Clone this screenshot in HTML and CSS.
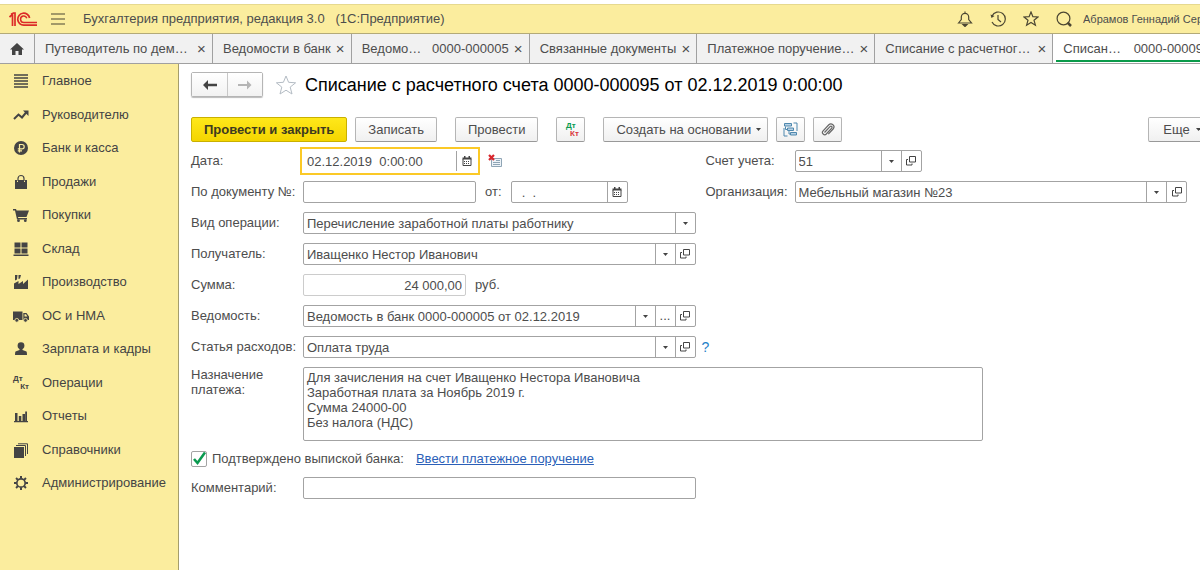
FILE: index.html
```html
<!DOCTYPE html>
<html lang="ru">
<head>
<meta charset="utf-8">
<title>Списание с расчетного счета</title>
<link rel="stylesheet" href="styles.css">
</head>
<body>
<svg class="sprite" aria-hidden="true">
  <symbol id="i-open" viewBox="0 0 12 12"><path d="M4.500 1.500h6v5.500h-6z" fill="none" stroke="#444"/><path d="M3 4.500H1.500v5.500h5.500V8.500" fill="none" stroke="#444"/></symbol>
  <symbol id="i-down" viewBox="0 0 5 3"><path d="M0 0h5L2.500 3z" fill="#444"/></symbol>
  <symbol id="i-cal" viewBox="0 0 10 10"><path d="M0.500 1.500h9v2h-9zM2 0h1.500v2H2zM6.500 0H8v2H6.500z" fill="#444"/><path d="M1 3v6.500h8V3" fill="none" stroke="#444"/><path d="M2 5h1v1H2zm2 0h1v1H4zm2 0h1v1H6zM2 7h1v1H2zm2 0h1v1H4zm2 0h1v1H6z" fill="#444"/></symbol>
</svg>
<header class="topbar">
  <svg class="logo" viewBox="0 0 29 15" aria-label="1С"><g fill="none" stroke="#dc2b28" stroke-width="1.700"><path d="M0.500 5 3.500 2.300V14M2 2.200 4.500 1H6V14"/><path d="M20.600 6A6 6 0 1 0 14.800 13.200H28"/><path d="M17.800 6.200a3.200 3.200 0 1 0-3 4.200H28" stroke-width="1.500"/></g></svg>
  <button class="icon-btn menu" aria-label="Меню"><svg width="14" height="12" viewBox="0 0 14 12"><path d="M0 1h14M0 6h14M0 11h14" stroke="#4b4632" stroke-width="1.200"/></svg></button>
  <span class="app-title">Бухгалтерия предприятия, редакция 3.0 &nbsp; (1С:Предприятие)</span>
  <div class="top-actions">
    <button class="icon-btn" aria-label="Уведомления"><svg width="16" height="16" viewBox="0 0 16 16" fill="none" stroke="#4b4632" stroke-width="1.200"><path d="M8 0.500v1.500M1.500 12 4.300 8.500V6a3.700 3.700 0 0 1 7.400 0v2.500L14.500 12z"/><path d="M6 13.500h4L8 15.500z" fill="#4b4632"/></svg></button>
    <button class="icon-btn" aria-label="История"><svg width="16" height="16" viewBox="0 0 16 16" fill="none" stroke="#4b4632" stroke-width="1.200"><path d="M2 5a7 7 0 1 1 0 6"/><path d="M8 4v4.500l3 2.500"/><path d="M0.500 3.500 4.500 5 1.500 7z" fill="#4b4632" stroke="none"/></svg></button>
    <button class="icon-btn" aria-label="Избранное"><svg width="16" height="16" viewBox="0 0 16 16" fill="none" stroke="#4b4632" stroke-width="1.200"><path d="M8 1l1.900 4.700 5.100.3-4 3.200 1.400 5L8 11.500l-4.400 2.700 1.400-5L1 6l5.100-.3z"/></svg></button>
    <button class="icon-btn" aria-label="Поиск"><svg width="16" height="16" viewBox="0 0 16 16" fill="none" stroke="#4b4632" stroke-width="1.200"><circle cx="7.500" cy="7.500" r="6.400"/><path d="M11.500 11.500 15 15" stroke-width="2.500"/></svg></button>
  </div>
  <span class="user">Абрамов Геннадий Сергеевич</span>
</header>
<nav class="tabs" aria-label="Открытые окна">
  <button class="home" aria-label="Начальная страница"><svg width="14" height="12" viewBox="0 0 14 12"><path d="M7 0 14 6.500H12V12H8.500V8h-3v4H2V6.500H0z" fill="#444"/></svg></button>
  <div class="tab wide"><a href="#">Путеводитель по дем…</a><button aria-label="Закрыть">×</button></div>
  <div class="tab"><a href="#">Ведомости в банк</a><button aria-label="Закрыть">×</button></div>
  <div class="tab wide"><a href="#"><span>Ведомо…</span><span>0000-000005</span></a><button aria-label="Закрыть">×</button></div>
  <div class="tab"><a href="#">Связанные документы</a><button aria-label="Закрыть">×</button></div>
  <div class="tab wide"><a href="#">Платежное поручение…</a><button aria-label="Закрыть">×</button></div>
  <div class="tab wide"><a href="#">Списание с расчетног…</a><button aria-label="Закрыть">×</button></div>
  <div class="tab wide active"><a href="#"><span>Списан…</span><span>0000-000095</span></a></div>
</nav>
<div class="workspace">
  <nav class="sidebar" aria-label="Разделы">
    <ul>
      <li><a href="#"><svg viewBox="0 0 16 16"><path d="M1 2h14M1 5h14M1 8h14M1 11h14M1 14h14" stroke="#444" stroke-width="1.400"/></svg>Главное</a></li>
      <li><a href="#"><svg viewBox="0 0 16 16"><path d="M1 12 5.500 7.500 9 10.500 13.500 5" fill="none" stroke="#444" stroke-width="2"/><path d="M10 3.500h5.500V9z" fill="#444"/></svg>Руководителю</a></li>
      <li><a href="#"><svg viewBox="0 0 16 16"><circle cx="8" cy="8" r="7" fill="#444"/><path d="M6.500 12.500V4.500H9a2.200 2.200 0 0 1 0 4.400H4.800M4.800 10.800H9" fill="none" stroke="#fbed9e" stroke-width="1.200"/></svg>Банк и касса</a></li>
      <li><a href="#"><svg viewBox="0 0 16 16"><path d="M2 6h2v2h1V6h6v2h1V6h2v9H2z" fill="#444"/><path d="M5 7V4.500a3 3 0 0 1 6 0V7" fill="none" stroke="#444" stroke-width="1.200"/></svg>Продажи</a></li>
      <li><a href="#"><svg viewBox="0 0 16 16"><path d="M0 2h3l.6 1.500H16L13.500 10H5l.3 1H14v1.500H4L2 3.500H0z" fill="#444"/><circle cx="5.500" cy="13.700" r="1.400" fill="#444"/><circle cx="12.300" cy="13.700" r="1.400" fill="#444"/></svg>Покупки</a></li>
      <li><a href="#"><svg viewBox="0 0 16 16"><path d="M1.500 1.500h6v5h-6zM8.500 1.500h6v5h-6zM1.500 7.500h6v5h-6zM8.500 7.500h6v5h-6zM0.500 13.500h15V15H.5z" fill="#444"/></svg>Склад</a></li>
      <li><a href="#"><svg viewBox="0 0 16 16"><path d="M1 15V9.500l4.500-2.500v3L10 7v3L15 5.500V15zM2 1h2.500L4 5.500 2 6.500zM5.500 1H8L7 4.500 5.500 5z" fill="#444"/></svg>Производство</a></li>
      <li><a href="#"><svg viewBox="0 0 16 16"><path d="M0 3.500h9.500V12H0zM10.300 5h3.200L16 8.500V12h-5.700z" fill="#444"/><path d="M11.500 6.200H13l1.400 2.300h-2.900z" fill="#fbed9e"/><g fill="#444" stroke="#fbed9e" stroke-width=".8"><circle cx="3.800" cy="12.300" r="1.900"/><circle cx="12.500" cy="12.300" r="1.900"/></g></svg>ОС и НМА</a></li>
      <li><a href="#"><svg viewBox="0 0 16 16"><circle cx="8" cy="4.700" r="3.400" fill="#444"/><path d="M6.500 7h3v2l4 1.500q.5.500.5 3.500H2q0-3 .5-3.500l4-1.500z" fill="#444"/></svg>Зарплата и кадры</a></li>
      <li><a href="#"><span class="dtkt"><b>Дт</b><b>Кт</b></span>Операции</a></li>
      <li><a href="#"><svg viewBox="0 0 16 16"><path d="M2 5h2.500v8H2zM5.800 8h2.500v5H5.800zM9.500 6H12v7H9.500zM12.200 3.500H14V13h-1.800zM1 13h14v1.300H1z" fill="#444"/></svg>Отчеты</a></li>
      <li><a href="#"><svg viewBox="0 0 16 16"><path d="M1 5h10v11H1z" fill="#444"/><path d="M3 3.500h9.500V14M5 1.800h9.500V12" fill="none" stroke="#444"/></svg>Справочники</a></li>
      <li><a href="#"><svg viewBox="0 0 16 16"><circle cx="8" cy="8" r="4.200" fill="none" stroke="#444" stroke-width="1.700"/><path d="M8 1v2.500M8 12.500V15M1 8h2.500M12.500 8H15M3.050 3.050l1.800 1.800M11.150 11.150l1.800 1.800M12.950 3.050l-1.800 1.800M4.850 11.150l-1.800 1.800" stroke="#444" stroke-width="2"/></svg>Администрирование</a></li>
    </ul>
  </nav>
  <main class="page">
    <div class="title-row">
      <div class="history">
        <button aria-label="Назад"><svg width="14" height="10" viewBox="0 0 14 10"><path d="M5 0 0 5l5 5V6.200h9V3.800H5z" fill="#444"/></svg></button>
        <button aria-label="Вперед"><svg width="14" height="10" viewBox="0 0 14 10"><path d="M9 0.500 13.500 5 9 9.500V6H0V4h9z" fill="#b5b5b5"/></svg></button>
      </div>
      <button class="icon-btn" aria-label="В избранное"><svg width="22" height="20" viewBox="0 0 22 20"><path d="M11 1l2.600 6.300 7 .5-5.400 4.300 1.800 6.900-6-3.800L5 19l1.800-6.900L1.400 7.800l7-.5z" fill="#fff" stroke="#b4bcc4"/></svg></button>
      <h1>Списание с расчетного счета 0000-000095 от 02.12.2019 0:00:00</h1>
    </div>
    <div class="toolbar">
      <div class="group">
        <button class="btn primary">Провести и закрыть</button>
        <button class="btn">Записать</button>
      </div>
      <button class="btn">Провести</button>
      <button class="btn square" aria-label="Проводки"><span class="dtkt color"><b>Дт</b><b>Кт</b></span></button>
      <div class="group">
        <button class="btn menu-btn">Создать на основании <svg width="5" height="3"><use href="#i-down"/></svg></button>
        <button class="btn square" aria-label="Структура подчиненности"><svg width="15" height="15" viewBox="0 0 15 15" fill="none" stroke="#4f88ae"><path d="M1.500 1.500h7v2.500h-7zM4.500 6h6v2.500h-6zM7.500 10.500h6v2.500h-6z" fill="#b9d3e6"/><path d="M10.500 1h3.500v8M1 6v8h3.500M2.500 4.500v3h2M6 9v3h1.500"/></svg></button>
        <button class="btn square" aria-label="Файлы"><svg width="14" height="14" viewBox="0 0 14 14"><path d="M3.500 9.500 9 3.700c1.200-1.200 2.800.3 1.700 1.500L5.300 11c-2 2-5.300-.8-3.200-3.200L7.600 2c2.800-2.800 7.200.8 4.500 4L7.300 11.200" fill="none" stroke="#666" stroke-width="1.200"/></svg></button>
      </div>
      <button class="btn menu-btn more">Еще <svg width="5" height="3"><use href="#i-down"/></svg></button>
    </div>
    <form class="form">
      <label for="date">Дата:</label>
      <div class="line">
        <div class="field date focused"><input id="date" value="02.12.2019  0:00:00"><button type="button" aria-label="Календарь"><svg width="10" height="10"><use href="#i-cal"/></svg></button></div>
        <svg class="status" width="15" height="14" viewBox="0 0 15 14"><path d="M3.500 4.500h10v8h-10z" fill="#edf3f8" stroke="#8fa5b5"/><path d="M8 6.500h4M5 8.500h7M5 10.500h7" stroke="#8fa5b5"/><path d="M1 1l5 5M6 1 1 6" stroke="#d8262c" stroke-width="2.200"/></svg>
      </div>
      <label class="second" for="account">Счет учета:</label>
      <div class="field account"><input id="account" value="51"><button type="button" aria-label="Выбрать"><svg width="5" height="3"><use href="#i-down"/></svg></button><button type="button" aria-label="Открыть"><svg width="12" height="12"><use href="#i-open"/></svg></button></div>

      <label for="number">По документу №:</label>
      <div class="line">
        <div class="field number"><input id="number"></div>
        <label for="from">от:</label>
        <div class="field from"><input id="from" value="  .  ."><button type="button" aria-label="Календарь"><svg width="10" height="10"><use href="#i-cal"/></svg></button></div>
      </div>
      <label class="second" for="org">Организация:</label>
      <div class="field"><input id="org" value="Мебельный магазин №23"><button type="button" aria-label="Выбрать"><svg width="5" height="3"><use href="#i-down"/></svg></button><button type="button" aria-label="Открыть"><svg width="12" height="12"><use href="#i-open"/></svg></button></div>

      <label class="start" for="kind">Вид операции:</label>
      <div class="field select"><select id="kind"><option>Перечисление заработной платы работнику</option></select><span class="arrow"><svg width="5" height="3"><use href="#i-down"/></svg></span></div>

      <label class="start" for="payee">Получатель:</label>
      <div class="field"><input id="payee" value="Иващенко Нестор Иванович"><button type="button" aria-label="Выбрать"><svg width="5" height="3"><use href="#i-down"/></svg></button><button type="button" aria-label="Открыть"><svg width="12" height="12"><use href="#i-open"/></svg></button></div>

      <label class="start" for="sum">Сумма:</label>
      <div class="line"><div class="field sum"><input id="sum" value="24 000,00" readonly></div><span>руб.</span></div>

      <label class="start" for="sheet">Ведомость:</label>
      <div class="field"><input id="sheet" value="Ведомость в банк 0000-000005 от 02.12.2019"><button type="button" aria-label="Выбрать"><svg width="5" height="3"><use href="#i-down"/></svg></button><button type="button">...</button><button type="button" aria-label="Открыть"><svg width="12" height="12"><use href="#i-open"/></svg></button></div>

      <label class="start" for="item">Статья расходов:</label>
      <div class="field"><input id="item" value="Оплата труда"><button type="button" aria-label="Выбрать"><svg width="5" height="3"><use href="#i-down"/></svg></button><button type="button" aria-label="Открыть"><svg width="12" height="12"><use href="#i-open"/></svg></button></div>
      <a class="help" href="#">?</a>

      <label class="start top" for="purpose">Назначение платежа:</label>
      <textarea id="purpose">Для зачисления на счет Иващенко Нестора Ивановича
Заработная плата за Ноябрь 2019 г.
Сумма 24000-00
Без налога (НДС)</textarea>

      <div class="confirm">
        <label class="check"><input type="checkbox" checked><span class="box"><svg width="14" height="14" viewBox="0 0 14 14"><path d="M2 7l3.500 4L13 0.500" fill="none" stroke="#0a9a50" stroke-width="2.600"/></svg></span>Подтверждено выпиской банка:</label>
        <a href="#">Ввести платежное поручение</a>
      </div>

      <label class="start" for="comment">Комментарий:</label>
      <div class="field"><input id="comment"></div>
    </form>
  </main>
</div>
</body>
</html>
```

FILE: styles.css
```css
* { box-sizing: border-box; }
body {
  margin: 0;
  padding-top: 4px;
  min-height: 100vh;
  display: flex;
  flex-direction: column;
  overflow: hidden;
  background: #fff;
  color: #4d4d4d;
  font: 13px/16px "Liberation Sans", Arial, sans-serif;
}
button, input, select, textarea { font: inherit; color: inherit; }
button { cursor: pointer; }
.sprite { position: absolute; width: 0; height: 0; }
svg { display: block; flex: none; }
.icon-btn { display: flex; padding: 0; border: 0; background: none; }

.topbar {
  flex: none;
  display: flex;
  align-items: center;
  height: 29px;
  padding-left: 9px;
  background: #fbed9e;
  border-top: 1px solid #e6d98f;
}
.logo { width: 29px; height: 15px; }
.menu { margin-left: 13px; }
.app-title { margin-left: 18px; white-space: nowrap; }
.top-actions { display: flex; gap: 17px; margin-left: auto; }
.user {
  width: 117px;
  margin-left: 11px;
  overflow: hidden;
  white-space: nowrap;
  font-size: 11px;
}

.tabs {
  flex: none;
  display: flex;
  height: 31px;
  background: #f1f1f1;
  border-top: 1px solid #b3aa78;
  border-bottom: 1px solid #a0a0a0;
}
.home {
  flex: none;
  display: flex;
  align-items: center;
  justify-content: center;
  width: 35px;
  padding: 0;
  border: 0;
  border-right: 1px solid #a0a0a0;
  background: none;
}
.tab {
  flex: none;
  display: flex;
  align-items: center;
  justify-content: space-between;
  gap: 5px;
  padding: 0 6px 0 10px;
  border-right: 1px solid #a0a0a0;
}
.tab.wide { width: 178px; }
.tab a {
  flex: 1;
  display: flex;
  justify-content: space-between;
  color: inherit;
  text-decoration: none;
  white-space: nowrap;
}
.tab button {
  width: 9px;
  padding: 0;
  border: 0;
  background: none;
  font-size: 15px;
  line-height: 16px;
}
.tab.active { position: relative; padding-right: 20px; background: #fff; }
.tab.active::after {
  content: "";
  position: absolute;
  left: 3px;
  right: 3px;
  bottom: 1px;
  height: 2px;
  background: #0a9a4a;
}

.workspace { flex: 1; display: flex; min-height: 0; }
.sidebar {
  flex: none;
  width: 179px;
  background: #fbed9e;
  border-right: 1px solid #a59d6c;
}
.sidebar ul { margin: 0; padding: 0; list-style: none; }
.sidebar li { height: 34px; }
.sidebar li:nth-child(even) { height: 33px; }
.sidebar a {
  display: flex;
  align-items: center;
  gap: 13px;
  height: 100%;
  padding-left: 13px;
  color: #444;
  text-decoration: none;
}
.sidebar svg { width: 16px; height: 16px; }
.dtkt {
  display: flex;
  flex-direction: column;
  width: 16px;
  font-size: 8px;
  line-height: 8px;
}
.dtkt b:last-child { align-self: flex-end; }
.dtkt.color b:first-child { color: #0a9a50; }
.dtkt.color b:last-child { color: #d9383a; }

.page { flex: 1; min-width: 0; overflow: hidden; padding: 8px 0 0 12px; }
.title-row { display: flex; align-items: center; gap: 12px; height: 25px; }
.history { display: flex; border: 1px solid #b5b5b5; border-radius: 2px; box-shadow: 0 1px 1px #bbb; }
.history button {
  display: flex;
  align-items: center;
  justify-content: center;
  width: 35px;
  height: 23px;
  padding: 0;
  border: 0;
  background: linear-gradient(#fff, #f2f2f2);
}
.history button + button { border-left: 1px solid #c8c8c8; }
h1 { margin: 0 0 0 -4px; font-size: 18px; line-height: 22px; font-weight: 400; color: #000; white-space: nowrap; }

.toolbar { display: flex; gap: 18px; margin: 20px -10px 8px 0; }
.group { display: flex; gap: 8px; }
.btn {
  display: flex;
  align-items: center;
  justify-content: center;
  height: 25px;
  padding: 0 12px;
  border: 1px solid #b5b5b5;
  border-bottom-color: #999;
  border-radius: 2px;
  background: linear-gradient(#fff, #f0f0f0);
  white-space: nowrap;
}
.btn.primary {
  border-color: #c9b000;
  background: linear-gradient(#ffe81a, #f4d500);
  color: #3d3a20;
  font-weight: 700;
}
.btn.square { width: 29px; padding: 0; }
.menu-btn { gap: 5px; padding-right: 6px; }
.menu-btn.more { width: 62px; margin-left: auto; gap: 6px; }

.form {
  display: grid;
  grid-template-columns: 112px minmax(0, 1fr) 99px minmax(0, 1fr);
  row-gap: 9px;
  align-items: center;
  margin-right: 13px;
}
.second { padding-left: 10px; }
.start { grid-column: 1; }
.start + * { grid-column: 2; }
.line { display: flex; align-items: center; gap: 9px; }
.field {
  display: flex;
  height: 22px;
  border: 1px solid #a3a3a3;
  border-radius: 2px;
  background: #fff;
}
.field input, .field select {
  flex: 1;
  min-width: 0;
  width: 100%;
  padding: 1px 3px 0;
  border: 0;
  outline: 0;
  background: none;
  white-space: pre;
}
.field select { appearance: none; padding-right: 24px; }
.field button, .arrow {
  flex: none;
  display: flex;
  align-items: center;
  justify-content: center;
  width: 20px;
  padding: 0;
  border: 0;
  border-left: 1px solid #a3a3a3;
  background: none;
}
.arrow { margin-left: -20px; pointer-events: none; }
.date { width: 174px; }
.focused { border-color: #fff; border-radius: 0; box-shadow: 0 0 0 1px #fff, 0 0 0 3px #fbc926; }
.status { margin-left: 2px; }
.account { width: 127px; }
.number { width: 173px; }
.from { width: 117px; }
.sum { width: 163px; border-color: #ccc; }
.sum input { text-align: right; }
.help { grid-column: 3; padding-left: 6px; color: #1e7fc8; text-decoration: none; font-size: 14px; }
.top { align-self: start; line-height: 15px; }
.form textarea {
  grid-column: 2 / -1;
  width: 100%;
  max-width: 680px;
  height: 74px;
  padding: 2px 3px;
  border: 1px solid #a3a3a3;
  border-radius: 2px;
  outline: 0;
  resize: none;
  line-height: 15px;
}
.confirm { grid-column: 1 / -1; display: flex; align-items: center; gap: 12px; height: 18px; }
.check { display: flex; align-items: center; gap: 5px; }
.check input { position: absolute; opacity: 0; }
.box { width: 16px; height: 16px; border: 1px solid #a3a3a3; border-radius: 2px; }
.confirm a { color: #2b5fb8; }
```
